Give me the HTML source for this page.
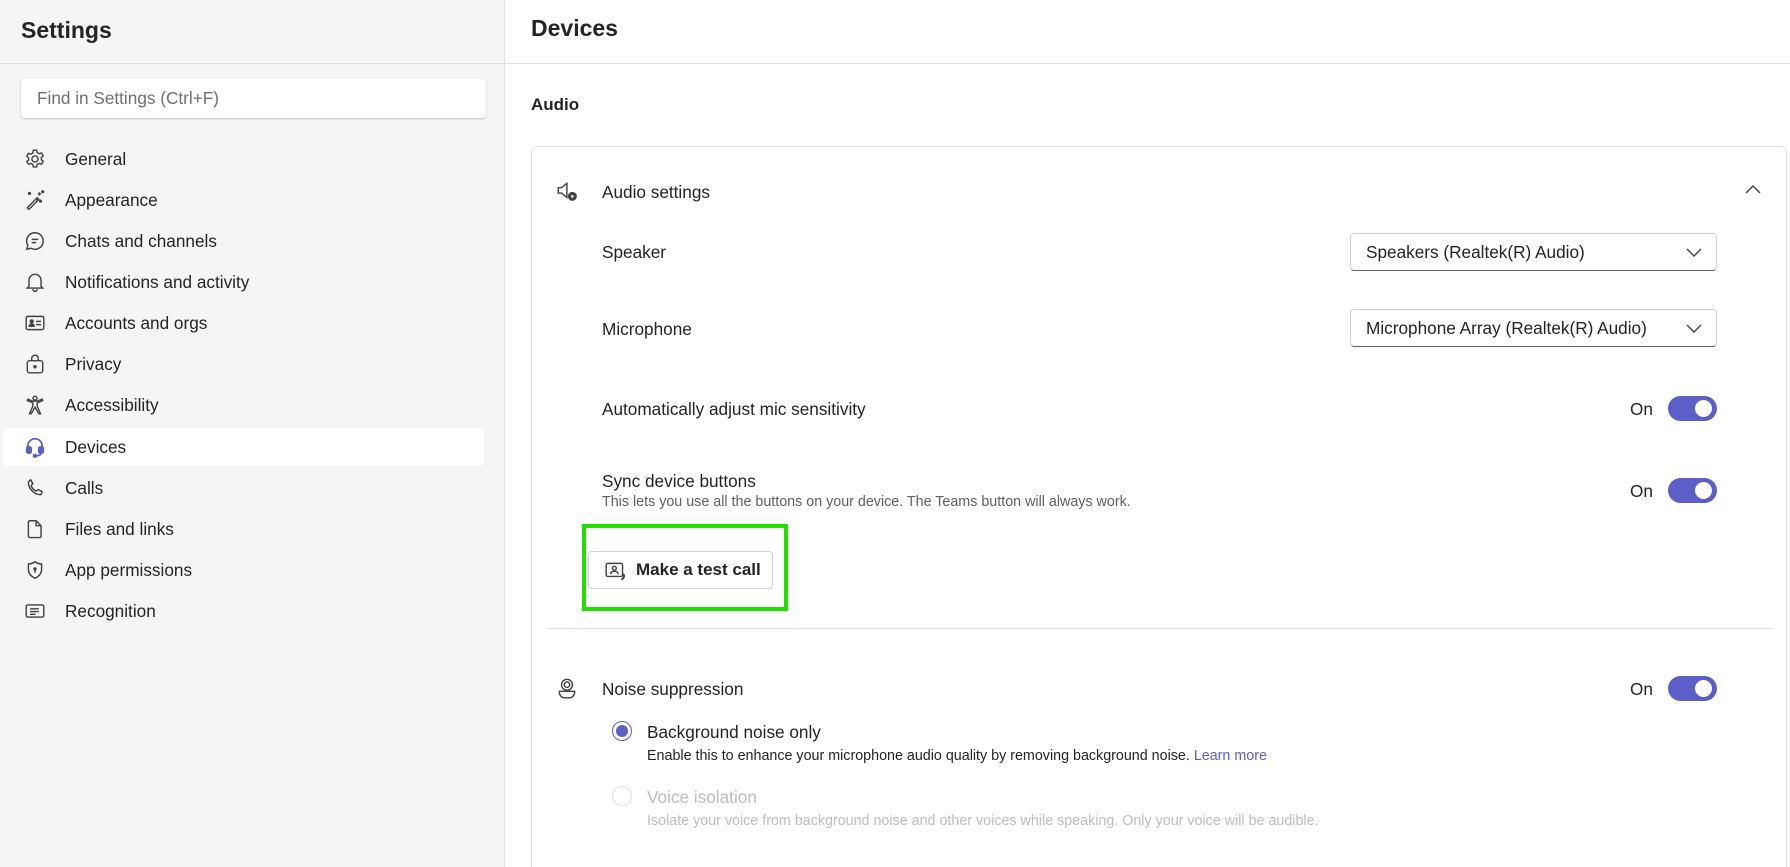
<!DOCTYPE html>
<html><head><meta charset="utf-8"><style>
*{box-sizing:border-box;margin:0;padding:0}
html,body{width:1790px;height:867px;overflow:hidden}
body{background:#fff;font-family:"Liberation Sans",sans-serif;color:#242424;position:relative}
.a{position:absolute;white-space:nowrap}
.side{position:absolute;left:0;top:0;width:505px;height:867px;background:#f5f5f5;border-right:1px solid #e0e0e0}
.nav{position:absolute;left:0;width:505px;height:40px;font-size:17.2px;line-height:40px}
.nav span{position:absolute;left:65px}
.nav svg{position:absolute;left:24px;top:9px}
.lbl{font-size:17.2px;line-height:24px}
.sub{font-size:14.3px;line-height:18px;color:#616161}
.dd{position:absolute;left:1350px;width:367px;height:38px;border:1px solid #d1d1d1;border-bottom-color:#616161;border-radius:4px;font-size:17.2px;line-height:36px;padding-left:15px}
.dd svg{position:absolute;right:14px;top:12px}
.tg{position:absolute;left:1668px;width:49px;height:25px;border-radius:13px;background:#5b5fc7}
.tg::after{content:"";position:absolute;right:5px;top:4px;width:17px;height:17px;border-radius:50%;background:#fff}
.on{font-size:17.2px;line-height:24px}
</style></head><body>
<div class="side"></div>
<div class="a" style="left:0;top:63px;width:1790px;height:1px;background:#e0e0e0"></div>
<div class="a" style="left:21px;top:16px;font-size:23px;font-weight:bold;line-height:28px">Settings</div>
<div class="a" style="left:531px;top:14px;font-size:23px;font-weight:bold;line-height:28px">Devices</div>
<div class="a" style="left:21px;top:79px;width:465px;height:39px;background:#fff;border-radius:4px;box-shadow:0 1px 2px rgba(0,0,0,.2);font-size:17.2px;line-height:39px;padding-left:16px;color:#707070">Find in Settings (Ctrl+F)</div>

<div class="a" style="left:3px;top:428px;width:481px;height:38px;background:#fff;border-radius:4px"></div>
<div class="nav" style="top:139px"><svg width="22" height="22" viewBox="0 0 20 20" fill="none" stroke="#424242" stroke-width="1.3"><circle cx="10" cy="10" r="2.8"/><path d="M8.5 2h3l.5 2.2 1.8 1 2.2-.7 1.5 2.6-1.7 1.5v2l1.7 1.5-1.5 2.6-2.2-.7-1.8 1-.5 2.2h-3l-.5-2.2-1.8-1-2.2.7-1.5-2.6L4.2 11V9L2.5 7.5 4 4.9l2.2.7 1.8-1z"/></svg><span>General</span></div>
<div class="nav" style="top:180px"><svg width="22" height="22" viewBox="0 0 20 20" fill="none" stroke="#424242" stroke-width="1.3"><path d="M3 17l9-9 1.5 1.5-9 9zM11 9l1.5 1.5"/><circle cx="5" cy="4" r=".8" fill="#424242"/><circle cx="17" cy="2.5" r=".8" fill="#424242"/><circle cx="15" cy="11" r=".8" fill="#424242"/><path d="M14 3v3M12.5 4.5h3"/></svg><span>Appearance</span></div>
<div class="nav" style="top:221px"><svg width="22" height="22" viewBox="0 0 20 20" fill="none" stroke="#424242" stroke-width="1.3"><path d="M10 2.5a7.5 7.5 0 1 1-3.6 14.1L2.5 17.5l1-3.6A7.5 7.5 0 0 1 10 2.5z"/><path d="M7 8.5h6M7 11.5h4"/></svg><span>Chats and channels</span></div>
<div class="nav" style="top:262px"><svg width="22" height="22" viewBox="0 0 20 20" fill="none" stroke="#424242" stroke-width="1.3"><path d="M4.5 14V8.5a5.5 5.5 0 0 1 11 0V14l1.5 1.5H3zM8 16.5a2 2 0 0 0 4 0"/></svg><span>Notifications and activity</span></div>
<div class="nav" style="top:303px"><svg width="22" height="22" viewBox="0 0 20 20" fill="none" stroke="#424242" stroke-width="1.3"><rect x="2" y="4" width="16" height="12" rx="1.5"/><circle cx="7" cy="8.5" r="1.3" fill="#424242"/><path d="M4.8 13c0-1.5 1-2 2.2-2s2.2.5 2.2 2z" fill="#424242"/><path d="M11 8.5h4.5M11 11.5h4.5"/></svg><span>Accounts and orgs</span></div>
<div class="nav" style="top:344px"><svg width="22" height="22" viewBox="0 0 20 20" fill="none" stroke="#424242" stroke-width="1.3"><rect x="3" y="7" width="14" height="11" rx="2"/><path d="M7 7V5a3 3 0 0 1 6 0v2"/><circle cx="10" cy="12.5" r=".9" fill="#424242"/></svg><span>Privacy</span></div>
<div class="nav" style="top:385px"><svg width="22" height="22" viewBox="0 0 20 20" fill="none" stroke="#424242" stroke-width="1.3"><circle cx="10" cy="3.8" r="1.8"/><path d="M3 6l5 2v3l-3 7h1.5L10 12l3.5 6H15l-3-7V8l5-2-.5-1.3L12 6.5H8L3.5 4.7z"/></svg><span>Accessibility</span></div>
<div class="nav" style="top:427px"><svg width="22" height="22" viewBox="0 0 20 20" fill="none" stroke="#5b5fc7" stroke-width="1.6"><path d="M3.5 12V9a6.5 6.5 0 0 1 13 0v3"/><rect x="2.5" y="10" width="4" height="5.5" rx="1.2" fill="#5b5fc7"/><rect x="13.5" y="10" width="4" height="5.5" rx="1.2" fill="#5b5fc7"/><path d="M15.5 15.5c0 2-2 2.5-4.5 2.5"/><circle cx="10" cy="18" r="1.2" fill="#5b5fc7"/></svg><span>Devices</span></div>
<div class="nav" style="top:468px"><svg width="22" height="22" viewBox="0 0 20 20" fill="none" stroke="#424242" stroke-width="1.3"><path d="M6 2.5l2 3.5-1.5 2c.8 2 2.5 3.8 4.5 4.8l2-1.4 3.5 2-1 2.5c-5.5 1-12-5.5-11.5-11.5z"/></svg><span>Calls</span></div>
<div class="nav" style="top:509px"><svg width="22" height="22" viewBox="0 0 20 20" fill="none" stroke="#424242" stroke-width="1.3"><path d="M5 2.5h6l4.5 4.5v9.5a1.3 1.3 0 0 1-1.3 1.3H5.3A1.3 1.3 0 0 1 4 16.5V3.5z"/><path d="M11 2.5V7h4.5"/></svg><span>Files and links</span></div>
<div class="nav" style="top:550px"><svg width="22" height="22" viewBox="0 0 20 20" fill="none" stroke="#424242" stroke-width="1.3"><path d="M10 2.5c2 1.5 4 2 6 2v5c0 4-3 6.5-6 8-3-1.5-6-4-6-8v-5c2 0 4-.5 6-2z"/><circle cx="10" cy="9" r=".9" fill="#424242"/><path d="M10 10v2.5"/></svg><span>App permissions</span></div>
<div class="nav" style="top:591px"><svg width="22" height="22" viewBox="0 0 20 20" fill="none" stroke="#424242" stroke-width="1.3"><rect x="2" y="4.5" width="16" height="11" rx="1.5"/><path d="M5.5 8h8M5.5 10.5h8M5.5 13h5"/></svg><span>Recognition</span></div>

<div class="a" style="left:531px;top:94px;font-size:17px;font-weight:bold;line-height:22px">Audio</div>
<div class="a" style="left:531px;top:146px;width:1256px;height:730px;border:1px solid #e0e0e0;border-radius:6px"></div>

<svg class="a" style="left:555px;top:179px" width="26" height="26" viewBox="0 0 24 24" fill="none" stroke="#424242" stroke-width="1.3"><path d="M3 8h3l5-4v13l-5-4H3z"/><circle cx="16" cy="16" r="3.5" fill="#424242"/><circle cx="16" cy="16" r="1.2" fill="#fff" stroke="none"/></svg>
<div class="a lbl" style="left:602px;top:180px">Audio settings</div>
<svg class="a" style="left:1744px;top:183px" width="18" height="14" viewBox="0 0 18 14" fill="none" stroke="#424242" stroke-width="1.4"><path d="M2 10l7-7 7 7"/></svg>

<div class="a lbl" style="left:602px;top:240px">Speaker</div>
<div class="dd" style="top:233px">Speakers (Realtek(R) Audio)<svg width="16" height="12" viewBox="0 0 16 12" fill="none" stroke="#424242" stroke-width="1.4"><path d="M1 3l7 7 7-7"/></svg></div>
<div class="a lbl" style="left:602px;top:317px">Microphone</div>
<div class="dd" style="top:309px">Microphone Array (Realtek(R) Audio)<svg width="16" height="12" viewBox="0 0 16 12" fill="none" stroke="#424242" stroke-width="1.4"><path d="M1 3l7 7 7-7"/></svg></div>

<div class="a lbl" style="left:602px;top:397px">Automatically adjust mic sensitivity</div>
<div class="a on" style="left:1630px;top:397px">On</div>
<div class="tg" style="top:396px"></div>

<div class="a lbl" style="left:602px;top:469px">Sync device buttons</div>
<div class="a sub" style="left:602px;top:493px">This lets you use all the buttons on your device. The Teams button will always work.</div>
<div class="a on" style="left:1630px;top:479px">On</div>
<div class="tg" style="top:478px"></div>

<div class="a" style="left:582px;top:524px;width:206px;height:87px;border:4.5px solid #22e000"></div>
<div class="a" style="left:588px;top:551px;width:185px;height:38px;border:1px solid #d1d1d1;border-radius:4px;background:#fff;font-size:17px;font-weight:bold;line-height:36px;padding-left:47px">Make a test call</div>
<svg class="a" style="left:604px;top:559px" width="24" height="24" viewBox="0 0 22 22" fill="none" stroke="#424242" stroke-width="1.3"><rect x="2" y="4" width="15" height="12" rx="1.5"/><circle cx="9.5" cy="8.5" r="1.8"/><path d="M6 14c0-2 1.5-2.7 3.5-2.7s3.5.7 3.5 2.7"/><path d="M17 14c2 0 2 3-1 5" stroke-width="1.8"/></svg>

<div class="a" style="left:548px;top:628px;width:1225px;height:1px;background:#e0e0e0"></div>

<svg class="a" style="left:555px;top:676px" width="24" height="24" viewBox="0 0 22 22" fill="none" stroke="#424242" stroke-width="1.3"><circle cx="11" cy="8" r="5"/><circle cx="11" cy="8" r="2.5"/><path d="M4 14h14v1a5 5 0 0 1-5 5H9a5 5 0 0 1-5-5z"/></svg>
<div class="a lbl" style="left:602px;top:677px">Noise suppression</div>
<div class="a on" style="left:1630px;top:677px">On</div>
<div class="tg" style="top:676px"></div>

<div class="a" style="left:612px;top:721px;width:20px;height:20px;border-radius:50%;border:1.5px solid #5b5fc7"></div>
<div class="a" style="left:616px;top:725px;width:12px;height:12px;border-radius:50%;background:#5b5fc7"></div>
<div class="a lbl" style="left:647px;top:720px">Background noise only</div>
<div class="a sub" style="left:647px;top:747px;color:#242424">Enable this to enhance your microphone audio quality by removing background noise. <span style="color:#5b5fc7">Learn more</span></div>

<div class="a" style="left:612px;top:786px;width:20px;height:20px;border-radius:50%;border:1.5px solid #e0e0e0"></div>
<div class="a lbl" style="left:647px;top:785px;color:#bdbdbd">Voice isolation</div>
<div class="a sub" style="left:647px;top:812px;color:#bdbdbd">Isolate your voice from background noise and other voices while speaking. Only your voice will be audible.</div>
</body></html>
